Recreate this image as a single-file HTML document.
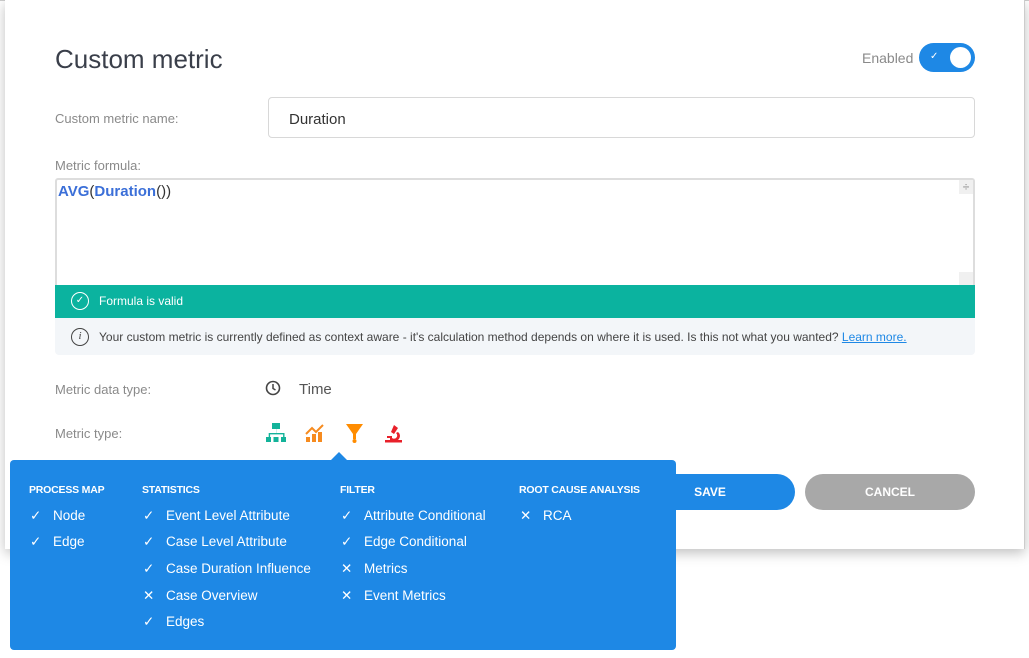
<!DOCTYPE html>
<html><head><meta charset="utf-8"><style>
*{box-sizing:border-box;margin:0;padding:0}
body{width:1029px;height:658px;overflow:hidden;background:#fff;font-family:"Liberation Sans",sans-serif;position:relative}
.abs{position:absolute}
.modal{left:5px;top:0;width:1020px;height:549px;background:#fff;box-shadow:0 4px 12px rgba(0,0,0,.25);border-right:1px solid #ccc}
.lbl{font-size:13px;color:#8a8a8a}
.pop{left:10px;top:460px;width:666px;height:190px;background:#1e88e5;border-radius:4px;color:#fff}
.h{font-size:10.5px;font-weight:bold;position:absolute;top:24px;letter-spacing:-0.2px}
.it{position:absolute;font-size:13.5px;white-space:nowrap}
.it span{display:inline-block;width:23px}
</style></head><body>
<div class="abs" style="left:0;top:0;width:1029px;height:1px;background:#ccc"></div>
<div class="abs modal"></div>
<div class="abs" style="left:55px;top:44px;font-size:26px;color:#3a3f4a">Custom metric</div>
<div class="abs lbl" style="left:862px;top:50px;font-size:14px">Enabled</div>
<div class="abs" style="left:919px;top:43px;width:56px;height:29px;border-radius:15px;background:#1e88e5">
<div class="abs" style="left:11px;top:8px;color:#fff;font-size:10px">✓</div>
<div class="abs" style="left:31px;top:4px;width:21px;height:21px;border-radius:50%;background:#fff"></div></div>
<div class="abs lbl" style="left:55px;top:111px">Custom metric name:</div>
<div class="abs" style="left:268px;top:97px;width:707px;height:41px;border:1px solid #d8d8d8;border-radius:4px;font-size:15px;color:#333;padding:13px 0 0 20px">Duration</div>
<div class="abs lbl" style="left:55px;top:158px">Metric formula:</div>
<div class="abs" style="left:55px;top:178px;width:920px;height:108px;border:2px solid #ddd;border-bottom:none;border-radius:3px 3px 0 0;font-size:15px;padding:3px 0 0 1px;color:#333"><b style="color:#3b6fd8">AVG</b>(<b style="color:#3b6fd8">Duration</b>())
<div class="abs" style="right:0;top:0;width:14px;height:14px;background:#f0f0f0;color:#888;font-size:12px;text-align:center;line-height:14px">÷</div>
<div class="abs" style="right:0;bottom:0;width:14px;height:14px;background:#f0f0f0"></div></div>
<div class="abs" style="left:55px;top:285px;width:920px;height:33px;background:#0bb39f;color:#fff;font-size:12px">
<div class="abs" style="left:16px;top:7px;width:18px;height:18px;border:1.5px solid #fff;border-radius:50%;font-size:10px;text-align:center;line-height:15px">✓</div>
<div class="abs" style="left:44px;top:9px">Formula is valid</div></div>
<div class="abs" style="left:55px;top:318px;width:920px;height:37px;background:#f3f6f9;border-radius:0 0 4px 4px;color:#444;font-size:12px">
<div class="abs" style="left:16px;top:10px;width:18px;height:18px;border:1.5px solid #444;border-radius:50%;font-size:11px;text-align:center;line-height:15px;font-style:italic;font-family:'Liberation Serif',serif">i</div>
<div class="abs" style="left:44px;top:12px;white-space:nowrap">Your custom metric is currently defined as context aware - it's calculation method depends on where it is used. Is this not what you wanted? <span style="color:#1e88e5;text-decoration:underline">Learn more.</span></div></div>
<div class="abs lbl" style="left:55px;top:382px">Metric data type:</div>
<svg class="abs" style="left:265px;top:380px" width="16" height="16"><circle cx="8" cy="8" r="6.5" fill="none" stroke="#444" stroke-width="1.6"/><path d="M8 4v4.5l2.5 1.5" fill="none" stroke="#444" stroke-width="1.5"/></svg>
<div class="abs" style="left:299px;top:381px;font-size:15px;color:#555">Time</div>
<div class="abs lbl" style="left:55px;top:426px">Metric type:</div>
<svg class="abs" style="left:265px;top:422px" width="22" height="22"><g fill="#13b39a"><rect x="7" y="1" width="8" height="6"/><rect x="1" y="15" width="5" height="5"/><rect x="8.5" y="15" width="5" height="5"/><rect x="16" y="15" width="5" height="5"/><path d="M10.3 7h1.4v4h7.8v4h-1.4v-2.6h-13v2.6h-1.4v-4h7.8v-4z"/></g></svg>
<svg class="abs" style="left:305px;top:422px" width="22" height="22"><g fill="#f68b1f"><rect x="1" y="15" width="4" height="5"/><rect x="7" y="12" width="4" height="8"/><rect x="13" y="10" width="4" height="10"/><path d="M1 12l6-6 4 4 7-7" fill="none" stroke="#f68b1f" stroke-width="2"/></g></svg>
<svg class="abs" style="left:345px;top:422px" width="20" height="22"><path d="M1 2h17l-7 10v5h-3v-5z" fill="#ff8c00"/><circle cx="9.5" cy="19" r="2" fill="#ff8c00"/></svg>
<svg class="abs" style="left:384px;top:422px" width="20" height="22"><g fill="#e8202a"><rect x="1" y="18" width="17" height="2.5"/><path d="M10 3l4 3-4 6-3-2z"/><path d="M14 10a5 5 0 0 1-6 8h-2v-2h2a3 3 0 0 0 4-5z"/><rect x="3" y="14" width="5" height="2"/></g></svg>
<div class="abs" style="left:600px;top:474px;width:195px;height:36px;border-radius:18px;background:#1e88e5;color:#fff;font-size:12px;font-weight:bold;text-align:center;line-height:37px;padding-left:25px">SAVE</div>
<div class="abs" style="left:805px;top:474px;width:170px;height:36px;border-radius:18px;background:#a8a8a8;color:#fff;font-size:12px;font-weight:bold;text-align:center;line-height:37px">CANCEL</div>
<div class="abs" style="left:330px;top:452px;width:0;height:0;border-left:9px solid transparent;border-right:9px solid transparent;border-bottom:9px solid #1e88e5"></div>
<div class="abs pop">
<div class="h" style="left:19px">PROCESS MAP</div>
<div class="h" style="left:132px">STATISTICS</div>
<div class="h" style="left:330px">FILTER</div>
<div class="h" style="left:509px">ROOT CAUSE ANALYSIS</div>
<div class="it" style="left:20px;top:48px"><span>✓</span>Node</div>
<div class="it" style="left:20px;top:74px"><span>✓</span>Edge</div>
<div class="it" style="left:133px;top:48px"><span>✓</span>Event Level Attribute</div>
<div class="it" style="left:133px;top:74px"><span>✓</span>Case Level Attribute</div>
<div class="it" style="left:133px;top:101px"><span>✓</span>Case Duration Influence</div>
<div class="it" style="left:133px;top:128px"><span>✕</span>Case Overview</div>
<div class="it" style="left:133px;top:154px"><span>✓</span>Edges</div>
<div class="it" style="left:331px;top:48px"><span>✓</span>Attribute Conditional</div>
<div class="it" style="left:331px;top:74px"><span>✓</span>Edge Conditional</div>
<div class="it" style="left:331px;top:101px"><span>✕</span>Metrics</div>
<div class="it" style="left:331px;top:128px"><span>✕</span>Event Metrics</div>
<div class="it" style="left:510px;top:48px"><span>✕</span>RCA</div>
</div>
</body></html>
